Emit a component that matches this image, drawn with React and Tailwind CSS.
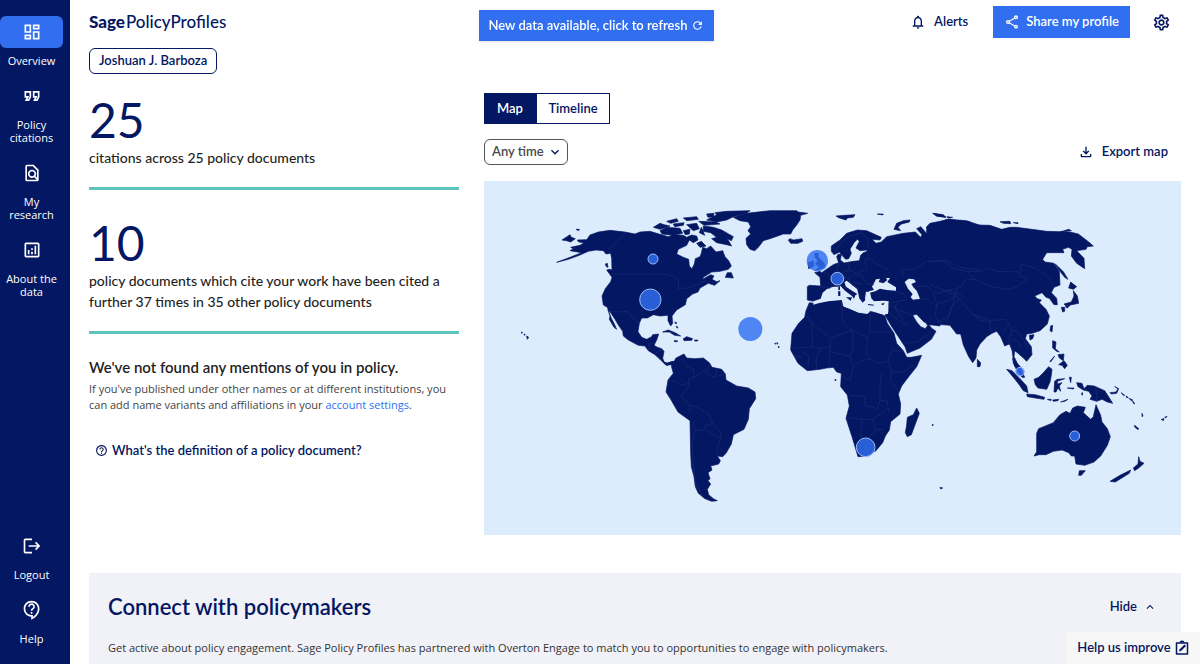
import {
  MdExpandLess,
  MdExpandMore,
  MdHelpOutline,
  MdLogout,
  MdOutlineAnalytics,
  MdOutlineContactSupport,
  MdOutlineDashboard,
  MdOutlineFileDownload,
  MdOutlineFindInPage,
  MdOutlineFormatQuote,
  MdOutlineNotifications,
  MdOutlineSettings,
  MdOutlineShare,
  MdRefresh,
} from "react-icons/md";

const mainNav = [
  { label: "Overview", Icon: MdOutlineDashboard, active: true },
  { label: "Policy citations", Icon: MdOutlineFormatQuote },
  { label: "My research", Icon: MdOutlineFindInPage },
  { label: "About the data", Icon: MdOutlineAnalytics },
];

const footerNav = [
  { label: "Logout", Icon: MdLogout },
  { label: "Help", Icon: MdOutlineContactSupport },
];

// Each region has its own origin, paths are relative to it
const regions = [
  {
    name: "north-america",
    origin: "translate(0 0)",
    land: [
      "M90 182L100 176 92 172 120 166 132 158 116 156 112 150 140 149 150 135 175 126 210 121 255 126 285 132 300 126 330 124 350 130 385 140 400 134 430 136 440 142 455 135 470 138 474 150 460 158 448 150 440 166 415 178 410 192 430 202 446 208 448 228 456 236 463 222 466 206 480 200 484 190 488 172 500 176 512 168 528 186 548 182 555 200 566 212 574 228 565 238 540 244 515 246 490 262 488 268 512 254 522 258 516 268 530 275 540 272 524 286 505 280 480 294 474 306 458 312 440 326 436 344 410 360 396 378 398 400 392 408 384 392 384 376 360 378 340 374 322 384 305 384 298 400 294 425 305 442 320 448 335 440 338 434 356 432 350 450 342 466 352 472 365 476 372 484 368 505 374 520 386 518 400 514 408 526 395 524 378 526 360 508 345 494 325 482 315 468 295 466 265 450 250 438 248 424 235 405 225 388 210 365 204 360 214 385 222 400 230 418 222 412 208 388 210 378 202 352 190 345 186 318 196 296 212 275 216 262 200 240 208 238 216 240 215 205 212 190 198 192 190 182 168 180 145 184 118 196 85 208 50 217 90 202 125 188Z",
      "M580 82L620 70 690 62 770 62 775 66 803 70 782 76 780 90 770 105 758 120 752 132 730 132 690 146 670 152 655 172 644 182 630 178 620 164 618 145 632 132 624 122 632 110 625 96 600 92Z",
      "M490 108L520 112 545 120 580 140 574 152 562 146 575 168 560 164 530 158 515 146 530 142 512 128 490 124Z",
      "M360 122L380 112 420 115 428 130 400 136 366 132Z",
      "M340 112L360 100 372 104 390 108 360 118Z",
      "M380 94L410 86 415 94 392 100ZM430 84L470 80 475 88 440 92ZM440 104L470 100 478 116 460 122ZM400 102L432 98 430 106 404 110Z",
      "M500 90L530 74 525 68 560 64 630 62 620 70 580 80 560 90 530 96ZM500 72L522 70 520 80 504 82ZM476 94L528 96 540 102 492 106ZM430 122L450 118 448 132 436 134Z",
      "M470 160L484 154 498 168 480 172ZM484 112L478 128 494 136 488 120Z",
      "M556 262L562 248 574 248 580 264Z",
      "M66 150L90 134 94 142 106 146 92 156 80 152ZM108 118L118 118 116 122ZM196 222L202 220 204 232 199 230Z",
      "M368 426L385 420 405 428 422 438 404 436 388 426ZM430 446L440 440 458 446 455 451 432 452ZM402 452L412 452 412 455 404 455ZM464 450L473 450 473 453 464 453Z",
      "M404 396L410 398 408 402ZM408 408L414 412 412 415ZM-56 426L-52 428-55 430ZM-48 432L-44 434-47 436ZM-40 438L-34 442-38 448Z",
    ],
    borders: [
      "M216 252H370L400 258 416 270 414 296 440 294 478 282 500 270",
      "M255 130L206 178 214 188",
      "M206 362L235 366 262 364 275 380 290 392 296 402",
      "M325 480L328 462 338 460M345 492L360 480 372 484",
    ],
  },
  {
    name: "south-america",
    origin: "translate(300 420)",
    land: [
      "M94 108L108 84 132 72 140 84 165 86 190 84 208 98 216 112 245 118 256 132 258 150 290 168 325 174 345 186 347 206 328 236 325 268 312 298 280 314 274 342 258 370 248 380 232 378 241 392 236 402 212 408 216 420 204 428 210 446 204 452 212 462 202 478 206 494 220 506 232 512 215 514 195 506 175 490 166 470 162 440 154 410 152 370 150 272 114 246 92 208 78 186 84 150 100 130Z",
      "M68 94L82 100 98 94 106 102 100 108 92 100 82 106Z",
    ],
    borders: [
      "M130 86L142 112 160 116 162 140 146 150 146 170 124 200 146 224 150 244",
      "M84 150L108 156 122 166 146 160",
      "M162 140L176 136 190 120 200 130 216 140 240 136 256 132M200 130L206 106M228 136L230 118",
      "M150 226L176 234 205 250 218 280 196 286 192 302 166 300 160 280",
      "M218 280L240 304 244 322 228 318 200 300M244 322L232 350 232 376M232 350L256 366",
      "M166 300L156 340 160 400 166 460 186 496",
    ],
  },
  {
    name: "europe",
    origin: "translate(690 0)",
    land: [
      "M112 330V290L118 286 152 288 150 262 134 248 150 244 155 248 172 236 190 224 206 218 200 200 205 192 214 194 211 210 222 219 250 214 268 212 272 196 280 188 292 184 290 180 270 182 258 174 268 154 262 148 252 158 240 178 244 190 236 206 227 208 216 196 208 186 192 194 184 184 184 168 210 150 230 130 262 120 290 122 334 142 330 150 306 148 318 160 334 156 350 140 400 130 436 126 452 142 456 134 440 116 452 110 468 128 476 146 480 130 470 112 490 104 530 88 590 92 630 106V400H480L450 380 436 366 354 345 340 334H130Z",
      "M372 118L380 100 400 92 420 90 418 96 394 102 384 112 392 122Z",
      "M198 78L225 76 255 74 250 82 232 84 228 90 208 84ZM322 72L340 72 338 75ZM490 70L520 76 528 82 500 78Z",
      "M55 150L60 146 70 150 96 146 98 154 84 160 62 160Z",
      "M134 190L146 190 144 200 152 208 164 222 164 232 136 242 148 230 136 222 144 212 136 204ZM114 218L130 212 132 228 116 236Z",
    ],
    water: [
      "M130 334L152 326 158 308 172 296 190 290 205 290 215 282 230 272 238 278 262 298 270 320 284 332 288 305 300 306 304 325 312 334 340 332 356 334 354 372 332 372 305 360 292 372 268 368 240 356 222 350 215 330 175 334 145 340 130 344Z",
      "M312 300L306 290 318 268 330 266 326 276 340 280 352 270 348 264 360 264 352 276 378 292 378 302 350 300 330 296 316 304 300 308 296 304Z",
      "M404 276L416 266 432 268 438 276 424 282 430 292 440 302 450 326 430 330 422 322 428 312 414 296Z",
    ],
    overlay: [
      "M206 282L222 274 228 290 246 302 262 312 256 316 252 326 246 318 225 302Z",
      "M228 322L246 322 242 332ZM204 304L211 304 211 318 205 318ZM205 290L210 288 210 301 205 299ZM294 342L312 344 310 347 294 345ZM332 342L344 338 340 346Z",
      "M262 298L280 312 286 330 278 338 268 325Z",
    ],
    borders: [
      "M152 288L180 296M160 244L186 262 184 290M206 218L200 240 212 250M236 218L238 240 212 250M238 240L262 250 290 236 284 210 300 206 320 222 346 232 360 250",
      "M212 262L236 264 250 254 276 256 290 282 312 284M236 264L246 284 266 296M250 276L276 284",
      "M192 188L214 158 240 138 276 128 296 150 294 170",
      "M400 260L396 240 440 236 470 214 530 212 570 232 630 240",
      "M440 290L470 288 500 310 540 300 580 320M490 310L500 340 496 380 512 400M430 330L470 326 490 340M560 300L546 350 530 392",
      "M374 304L400 310 410 330 380 334M356 340L380 336 376 356 400 390",
    ],
  },
  {
    name: "africa",
    origin: "translate(690 270)",
    land: [
      "M118 68L132 70 175 62 216 60 218 78 240 88 268 100 275 88 300 94 332 102 345 108 352 130 372 160 380 190 400 212 410 232 424 232 455 226 440 260 420 285 395 318 385 342 392 372 390 402 362 425 358 450 346 468 338 488 318 512 290 528 264 530 258 510 246 470 228 415 238 378 232 345 212 320 214 280 200 276 190 262 170 264 150 268 112 272 84 250 62 210 66 160 86 130 104 112 108 92Z",
      "M345 105L356 96 354 74 420 60H510V138L480 134 462 126 440 103 428 106 440 126 452 140 466 146 476 132 484 144 498 154 484 178 450 204 412 220 405 200 385 170 362 135Z",
      "M440 384L448 400 436 432 424 464 412 470 406 458 410 435 412 412 430 404Z",
      "M194 300L198 298 197 303ZM486 434L490 434 488 438ZM14 190L18 190 16 193ZM24 200L28 200 26 204ZM20 188L24 190 22 193Z",
    ],
    borders: [
      "M110 108L126 130 180 174 200 168 246 150 292 172M126 130L128 200 70 204M214 60L218 128 246 150M300 94V156H370M300 156L292 172 290 222 300 236",
      "M246 150L250 200 240 230 180 214 182 176M180 214L176 262M150 206L138 240 140 266M128 200L150 206 180 200M96 212L116 230 114 262M74 226L96 232",
      "M240 230L250 260 240 300 214 290M250 260L270 244 300 236 320 250 354 244 366 210 400 214M354 244L366 278 400 276 430 256M366 278L360 300 384 330",
      "M238 346L284 350 286 376 322 386 330 360 330 312 336 280M228 412L270 418 306 418 330 404 350 386M276 418L272 470 290 480 318 450 340 448M306 418L318 450M330 360L352 364 356 396",
      "M376 114L360 96M376 114L420 140M405 190L440 186 462 172 478 160M356 74L400 96 428 106",
    ],
  },
  {
    name: "asia",
    origin: "translate(1170 0)",
    land: [
      "M-10 110L0 100 60 88 120 96 110 104 180 106 215 118 240 112 260 112 350 124 420 126 445 132 475 155 490 168 472 170 468 178 440 182 462 205 464 236 440 220 424 198 426 178 415 172 398 178 402 188 350 188 338 208 345 216 372 220 388 245 390 285 372 292 364 308 380 325 382 344 372 344 358 325 348 322 336 308 314 318 322 326 334 330 328 338 348 358 358 378 352 402 330 422 306 430 290 432 286 446 304 470 306 494 290 514 278 502 262 488 254 482 252 500 262 520 274 534 255 530 250 510 246 480 238 462 224 468 212 440 200 424 186 430 170 440 150 462 140 480 138 504 128 518 116 500 100 465 92 432 80 432 60 406 10 402-10 404Z",
      "M142 508L152 518 150 530 142 530ZM298 436L312 434 308 446 300 450ZM362 408L368 406 366 426 360 422Z",
      "M422 276L440 290 430 298 416 294ZM430 302L442 318 446 340 425 344 408 348 402 342 424 336 432 318ZM394 352L404 352 404 364 398 366ZM406 350L420 346 412 354Z",
      "M376 222L400 245 414 268 404 262 384 236Z",
      "M368 452L378 456 376 476 388 486 380 484 368 474ZM386 524L402 512 412 526 404 536 396 526ZM384 494L402 492 400 512 388 504ZM360 514L374 498 362 516Z",
      "M8 70L40 74 46 82 20 78ZM50 80L68 82 56 85ZM210 95L240 94 242 101 220 100ZM250 98L264 98 264 101ZM390 126L416 118 424 122Z",
    ],
    borders: [
      "M0 214L40 214 70 236 112 244 134 268 190 292 236 298 262 290 294 266 268 258 274 222 320 236 356 262 372 290",
      "M112 244L160 244 170 232 204 244 268 246M134 268L104 270 96 290 50 304 0 284",
      "M50 304L76 316 100 340 126 372 180 392 226 388 236 400 220 430M96 320L64 350 58 380 20 396M76 316L60 330 16 344M126 372L150 390 178 396M180 392L182 424",
      "M236 400L246 420 236 450 246 480M246 420L266 428 280 450 296 474M246 446L270 456 272 476",
    ],
  },
  {
    name: "oceania",
    origin: "translate(1290 390)",
    land: [
      "M128 115L138 128 152 145 164 172 156 172 140 150 130 130Z",
      "M110 148L126 152 150 176 170 198 174 218 160 212 146 192 130 172Z",
      "M170 222L196 224 224 232 222 238 196 234 172 230ZM232 238L244 238 242 242ZM248 240L266 238 264 242 250 244ZM272 246L294 238 284 244Z",
      "M192 178L206 172 220 158 236 140 246 148 244 166 240 186 230 208 204 204 196 194Z",
      "M254 184L262 178 284 176 262 184 262 192 276 188 268 198 272 214 264 204 258 216 252 216Z",
      "M298 172L304 172 302 188ZM292 204L312 204 310 207ZM334 220L338 218 337 226Z",
      "M320 188L336 190 342 206 352 196 372 198 404 212 412 224 428 250 412 246 396 238 380 244 360 238 366 228 356 214 340 210 324 200Z",
      "M192 408L200 395 200 340 206 326 250 308 270 284 288 274 300 280 308 264 322 258 346 262 340 278 362 298 370 290 378 254 392 286 396 306 412 326 421 350 412 376 392 408 372 426 344 436 318 432 314 408 304 408 296 398 276 390 250 394 228 404 208 404Z",
      "M328 452L346 452 334 466 326 466Z",
      "M506 410L510 424 522 430 506 444 494 452 490 444 504 432ZM482 450L478 460 436 486 420 484 450 466Z",
      "M420 218L438 216 444 206 434 200 446 206 440 220 424 222Z",
      "M454 218L464 226 460 226ZM468 228L474 232 470 233ZM476 234L488 240 484 242ZM488 242L494 252 490 250ZM516 280L519 288 516 290Z",
      "M494 316L506 326 504 329 494 321ZM574 298L582 296 580 302ZM584 292L591 289 588 293ZM-90 502L-82 504-88 507Z",
    ],
    borders: ["M378 200L380 244"],
  },
];

const markers = [
  { place: "Canada", x: 339, y: 207, r: 15, ring: true },
  { place: "United States", x: 331, y: 329, r: 32, ring: true },
  { place: "International", x: 631, y: 417, r: 36 },
  { place: "United Kingdom", x: 832, y: 212, r: 32 },
  { place: "Switzerland", x: 892, y: 266, r: 19, ring: true },
  { place: "South Africa", x: 977, y: 772, r: 28, ring: true },
  { place: "Malaysia", x: 1440, y: 545, r: 13, ring: true },
  { place: "Australia", x: 1604, y: 738, r: 15, ring: true },
];

const WorldMap = () => {
  return (
    <svg viewBox="-168 -27 2091 1062" className="block w-full bg-[#dcecfd]">
      {regions.map((region) => (
        <g key={region.name} transform={region.origin}>
          {region.land.map((d) => (
            <path key={d} d={d} fill="#041762" stroke="#041762" strokeWidth="2" />
          ))}
        </g>
      ))}
      {regions.map((region) => (
        <g key={region.name} transform={region.origin}>
          {region.water?.map((d) => (
            <path key={d} d={d} fill="#dcecfd" />
          ))}
          {region.overlay?.map((d) => (
            <path key={d} d={d} fill="#041762" />
          ))}
          {region.borders.map((d) => (
            <path key={d} d={d} fill="none" stroke="#1c2c76" strokeWidth="2" />
          ))}
        </g>
      ))}
      {markers.map((m) => (
        <circle
          key={m.place}
          cx={m.x}
          cy={m.y}
          r={m.r}
          fill="#316ff0"
          fillOpacity="0.82"
          stroke={m.ring ? "#9dbcf4" : "none"}
          strokeWidth="3"
        />
      ))}
    </svg>
  );
};

const NavItem = ({ label, Icon, active }) => {
  return (
    <a href="#" className="flex flex-col items-center text-center text-[11px] leading-[13px] text-white">
      <span
        className={
          active
            ? "flex h-8 w-full items-center justify-center rounded-md bg-[#316ff0]"
            : "flex h-8 w-full items-center justify-center"
        }
      >
        <Icon className="h-5 w-5" />
      </span>
      <span className="mt-[6px] px-1">{label}</span>
    </a>
  );
};

const Sidebar = () => {
  return (
    <nav className="flex w-[70px] shrink-0 flex-col justify-between bg-[#041762] pt-4 pr-[7px] pb-[19px]">
      <div className="flex flex-col gap-[13px]">
        {mainNav.map((item) => (
          <NavItem key={item.label} {...item} />
        ))}
      </div>
      <div className="flex flex-col gap-[13px]">
        {footerNav.map((item) => (
          <NavItem key={item.label} {...item} />
        ))}
      </div>
    </nav>
  );
};

const Header = () => {
  return (
    <header className="flex items-start justify-between font-[Lato,sans-serif] text-[#041762]">
      <div className="pt-3">
        <div className="text-[17px] leading-5">
          <span className="font-black">Sage</span>
          <span className="ml-px font-medium">PolicyProfiles</span>
        </div>
        <button className="mt-4 h-[26px] rounded-md border border-[#041762] px-[9px] text-[13px] font-semibold">
          Joshuan J. Barboza
        </button>
      </div>
      <div className="flex items-center pt-[6px] text-[13px] font-semibold">
        <button className="mr-[25px] flex items-center gap-2">
          <MdOutlineNotifications className="h-4 w-4" />
          Alerts
        </button>
        <button className="flex h-8 items-center gap-[6px] bg-[#316ff0] px-[11px] text-white">
          <MdOutlineShare className="h-4 w-4" />
          Share my profile
        </button>
        <button aria-label="Settings" className="mr-[10px] ml-[22px]">
          <MdOutlineSettings className="h-[19px] w-[19px]" />
        </button>
      </div>
    </header>
  );
};

const Summary = () => {
  return (
    <div className="font-[Lato,sans-serif] text-[#1f1f1f]">
      <section className="border-b-[3px] border-[#5fc4be] pb-[19px]">
        <p className="text-5xl leading-[54px] text-[#041762]">25</p>
        <p className="text-sm leading-[21px] font-medium">citations across 25 policy documents</p>
      </section>
      <section className="mt-[26px] border-b-[3px] border-[#5fc4be] pb-[19px]">
        <p className="text-5xl leading-[54px] text-[#041762]">10</p>
        <p className="text-sm leading-[21px] font-medium">
          policy documents which cite your work have been cited a further 37 times in 35 other
          policy documents
        </p>
      </section>
      <h2 className="mt-[23px] text-[15px] leading-5 font-semibold">
        We've not found any mentions of you in policy.
      </h2>
      <p className="mt-1 font-['Open_Sans',sans-serif] text-[11px] leading-4 text-[#444]">
        If you've published under other names or at different institutions, you can add name
        variants and affiliations in your{" "}
        <a href="#" className="text-[#316ff0]">
          account settings
        </a>
        .
      </p>
      <button className="mt-[27px] ml-[6px] flex items-center gap-1 text-[13px] leading-5 font-semibold text-[#041762]">
        <MdHelpOutline className="h-[13px] w-[13px]" />
        What's the definition of a policy document?
      </button>
    </div>
  );
};

const MapPanel = () => {
  return (
    <div className="font-[Lato,sans-serif] text-[13px] font-semibold text-[#041762]">
      <div className="flex h-[31px]">
        <button className="w-[52px] bg-[#041762] text-white">Map</button>
        <button className="w-[74px] border border-[#041762]">Timeline</button>
      </div>
      <div className="mt-[15px] mb-4 flex items-center justify-between">
        <div className="relative">
          <select
            aria-label="Time range"
            className="h-[26px] w-[84px] appearance-none rounded-md border border-[#555] bg-white pl-[7px] text-[13px] font-semibold text-[#4a4a4a]"
          >
            <option>Any time</option>
          </select>
          <MdExpandMore className="pointer-events-none absolute top-[5px] right-[5px] h-4 w-4" />
        </div>
        <button className="mr-[13px] flex items-center gap-2">
          <MdOutlineFileDownload className="h-4 w-4" />
          Export map
        </button>
      </div>
      <WorldMap />
    </div>
  );
};

const App = () => {
  return (
    <div className="flex h-screen overflow-hidden bg-white font-['Open_Sans',sans-serif]">
      <Sidebar />
      <main className="min-w-0 flex-1 overflow-hidden px-[19px]">
        <Header />
        <div className="mt-[19px] grid grid-cols-[370fr_697fr] gap-x-[25px]">
          <Summary />
          <MapPanel />
        </div>

        <section className="mt-[38px] bg-[#f1f2f8] px-[19px] pt-5 pb-8">
          <div className="flex items-center justify-between font-[Lato,sans-serif] text-[#041762]">
            <h2 className="text-[22px] leading-7 font-semibold">Connect with policymakers</h2>
            <button className="mr-[5px] flex items-center gap-[6px] text-[13px] font-semibold">
              Hide
              <MdExpandLess className="h-[14px] w-[14px]" />
            </button>
          </div>
          <p className="mt-[18px] text-[11px] leading-[18px] text-[#333]">
            Get active about policy engagement. Sage Policy Profiles has partnered with Overton
            Engage to match you to opportunities to engage with policymakers.
          </p>
        </section>
      </main>

      {/* Refresh notice */}
      <button className="fixed top-[10px] left-1/2 -ml-[121px] flex h-[31px] w-[235px] items-center justify-center gap-1 bg-[#316ff0] font-[Lato,sans-serif] text-[13px] font-semibold text-white shadow-sm">
        New data available, click to refresh
        <MdRefresh className="h-[13px] w-[13px]" />
      </button>

      {/* Feedback */}
      <button className="fixed right-0 bottom-0 flex h-8 w-[134px] items-center justify-center gap-1 bg-[#f7f7f7] font-[Lato,sans-serif] text-[13px] font-semibold text-[#041762]">
        Help us improve
        <svg viewBox="0 0 14 16" className="h-4 w-[14px]" fill="none" stroke="currentColor">
          <path d="M1.500 3h11v11h-11z" strokeWidth="1.500" strokeLinejoin="round" />
          <path d="M4.500 2.500a2.500 2 0 0 1 5 0z" fill="currentColor" stroke="none" />
          <path d="M4 11.500l.5-2 5-5 1.500 1.500-5 5z" fill="currentColor" stroke="none" />
        </svg>
      </button>
    </div>
  );
};

export default App;
